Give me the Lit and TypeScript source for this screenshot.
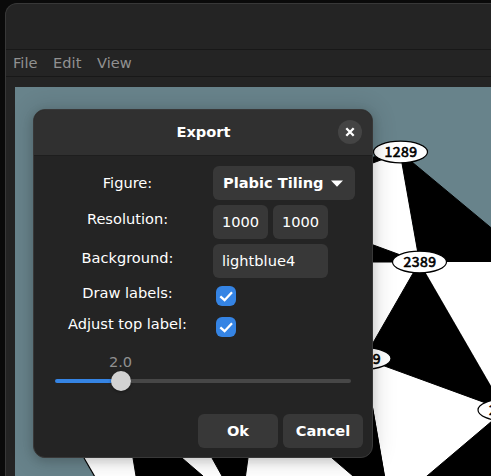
import { LitElement, html, svg, css } from "lit";
import { customElement, property, state } from "lit/decorators.js";

interface Tile { points: string; fill: string; }
interface TileNode { x: number; y: number; label: string; }

const TILES: Tile[] = [
  { fill: "#fff", points: "300,190 400,152 419.5,262 560,262 560,560 142,560 84,458 60,300" },
  { fill: "#000", points: "400,152 620,335 620,262 419.5,262" },
  { fill: "#000", points: "340,170 400,147 400,153 340,175" },
  { fill: "#000", points: "300,218 419.5,262 300,262" },
  { fill: "#000", points: "419.5,262 505,410 364,358.5" },
  { fill: "#fff", points: "419.5,262 560,262 560,410 505,410" },
  { fill: "#000", points: "505,410 388,509 560,509 560,410" },
  { fill: "#000", points: "364,358.5 390,509 248,367" },
  { fill: "#fff", points: "364,358.5 364,366 300,431 355,477 384,477 200,477 250,380" },
];
const LOWER: Tile[] = [
  { fill: "#000", points: "300,430 332,458 353,476 384.5,476 364,358.5" },
  { fill: "#000", points: "130,440 133,458 136,476 203,476 182,458 160,439" },
  { fill: "#000", points: "200,437 212,458 222,476 245.5,476 248,458 251,437" },
];
const NODES: TileNode[] = [
  { x: 400.5, y: 152, label: "1289" },
  { x: 419.5, y: 262, label: "2389" },
  { x: 364, y: 358.5, label: "3489" },
  { x: 505, y: 410, label: "2378" },
];

@customElement("tiling-canvas")
export class TilingCanvas extends LitElement {
  static styles = css`
    :host { display: block; flex: 1; min-height: 0; background: #68838b; overflow: hidden; }
    svg { display: block; width: 476px; height: 389px; }
    .label { font: 400 14px "Noto Sans CJK JP", sans-serif; letter-spacing: .5px; text-anchor: middle; stroke: #000; stroke-width: .65px; }
  `;
  render() {
    return html`<svg viewBox="15 87 476 389">
      ${[...TILES, ...LOWER].map((t) => svg`<polygon points=${t.points} fill=${t.fill} stroke=${t.fill === "#fff" ? "none" : "#000"} stroke-width="1" />`)}
      <path d="M84 458 95 477" stroke="#000" stroke-width="1.2" />
      ${NODES.map((n) => svg`
        <ellipse cx=${n.x} cy=${n.y} rx="27" ry="10.8" fill="#fff" stroke="#000" stroke-width="1.2" />
        <text class="label" x=${n.x + 0.5} y=${n.y + 5.2}>${n.label}</text>`)}
    </svg>`;
  }
}

@customElement("check-box")
export class CheckBox extends LitElement {
  @property({ type: Boolean }) checked = false;
  static styles = css`
    :host { display: block; width: 20px; height: 20px; margin-left: 3px; border-radius: 6px; background: #3584e4; }
    svg { display: block; }
  `;
  render() {
    return html`<svg width="20" height="20" viewBox="0 0 20 20" @click=${() => (this.checked = !this.checked)}>
      ${this.checked ? svg`<path d="M4.3 10.3 8.6 14.2 16 6.2" fill="none" stroke="#fff" stroke-width="2.3" />` : null}
    </svg>`;
  }
}

@customElement("export-dialog")
export class ExportDialog extends LitElement {
  @state() private scale = 2;
  static styles = css`
    :host {
      display: flex; flex-direction: column; box-sizing: border-box; width: 340px; height: 349px;
      border-radius: 12px; background: #242424; color: #fff; overflow: hidden;
      box-shadow: 0 3px 10px 1px rgba(0, 0, 0, .13), 0 1px 22px 4px rgba(0, 0, 0, .12);
      border: 1px solid #383838;
    }
    header {
      display: grid; grid-template-columns: 1fr auto 1fr; align-items: center; height: 46px; flex: none;
      background: #303030; border-bottom: 1px solid #1e1e1e; box-sizing: border-box; padding: 0 10px 1px 0;
    }
    .title { grid-column: 2; font-weight: bold; padding-left: 11px; }
    .close { justify-self: end; width: 24px; height: 24px; border-radius: 50%; background: #444; }
    .close svg { display: block; }
    .form { display: grid; grid-template-columns: 151px auto; justify-content: start; column-gap: 9px; margin: 10px 0 0 19px;
      grid-template-rows: 34px 34px 34px 26px 26px; row-gap: 5px; }
    .label { text-align: center; line-height: 34px; padding-right: 2px; }
    .label.up { margin-top: -3px; }
    .label.check { line-height: 20px; margin-top: 0; }
    .checkrow { margin-top: 3px; }
    .field { box-sizing: border-box; height: 34px; line-height: 34px; border-radius: 6px; background: #383838; padding-left: 9px; }
    .pair { display: flex; gap: 5px; }
    .pair .field { width: 55px; }
    .wide { width: 115px; }
    .select { display: flex; align-items: center; justify-content: space-between; width: 142px; padding: 0 12px 0 10px; font-weight: bold; }
    .slider { width: 296px; margin: 13px 0 0 21px; }
    .value { width: 131px; text-align: center; color: #909090; line-height: 18px; }
    .bar { display: flex; align-items: center; height: 20px; }
    .fill { height: 4px; background: #3584e4; border-radius: 2px 0 0 2px; margin-right: -10px; }
    .knob { width: 20px; height: 20px; border-radius: 50%; background: #d2d2d2; box-shadow: 0 1px 3px rgba(0,0,0,.4); }
    .rest { flex: 1; height: 4px; background: #474747; border-radius: 0 2px 2px 0; }
    footer { display: flex; justify-content: flex-end; gap: 5px; margin: auto 9px 9px 0; }
    .button { width: 80px; height: 34px; line-height: 34px; border-radius: 6px; background: #383838; font-weight: bold; text-align: center; }
  `;
  render() {
    return html`
      <header>
        <span class="title">Export</span>
        <span class="close"><svg width="24" height="24" viewBox="0 0 24 24"><path d="M8.3 8.3 15.7 15.7M15.7 8.3 8.3 15.7" stroke="#fff" stroke-width="2.3" /></svg></span>
      </header>
      <div class="form">
        <div class="label">Figure:</div>
        <div class="field select"><span>Plabic Tiling</span><svg width="12" height="7" viewBox="0 0 12 7"><path d="M0 .5H12L6 6.7Z" fill="#fff" /></svg></div>
        <div class="label up">Resolution:</div>
        <div class="pair"><div class="field">1000</div><div class="field">1000</div></div>
        <div class="label up">Background:</div>
        <div class="field wide">lightblue4</div>
        <div class="label check">Draw labels:</div>
        <div class="checkrow"><check-box checked></check-box></div>
        <div class="label check">Adjust top label:</div>
        <div class="checkrow"><check-box checked></check-box></div>
      </div>
      <div class="slider">
        <div class="value">${this.scale.toFixed(1)}</div>
        <div class="bar">
          <span class="fill" style="width:${(this.scale * 66) / 2}px"></span><span class="knob"></span><span class="rest"></span>
        </div>
      </div>
      <footer><div class="button">Ok</div><div class="button">Cancel</div></footer>`;
  }
}

@customElement("app-root")
export class AppRoot extends LitElement {
  static styles = css`
    :host { display: block; position: relative; width: 491px; height: 476px; overflow: hidden; background: #0a0a0a; font: 14.6px/18px "DejaVu Sans", sans-serif; }
    .window { display: flex; flex-direction: column; box-sizing: border-box; width: 498px; height: 485px; margin-left: 5px; border: 1px solid #383838; border-bottom: 0; border-radius: 12px 0 0 0; background: #242424; }
    .shell { display: flex; padding-top: 3px; }
    .titlebar { height: 45px; flex: none; border-bottom: 1px solid #181818; }
    nav { display: flex; gap: 15.7px; flex: none; height: 26px; line-height: 26px; padding-left: 7px; color: #919191; border-bottom: 1px solid #181818; }
    .canvas { display: flex; flex: 1; margin: 10px 0 0 9px; }
    export-dialog { position: absolute; left: 33px; top: 109px; }
  `;
  render() {
    return html`
      <div class="shell"><div class="window">
        <div class="titlebar"></div>
        <nav><span>File</span><span>Edit</span><span>View</span></nav>
        <div class="canvas"><tiling-canvas></tiling-canvas></div>
      </div></div>
      <export-dialog></export-dialog>`;
  }
}
